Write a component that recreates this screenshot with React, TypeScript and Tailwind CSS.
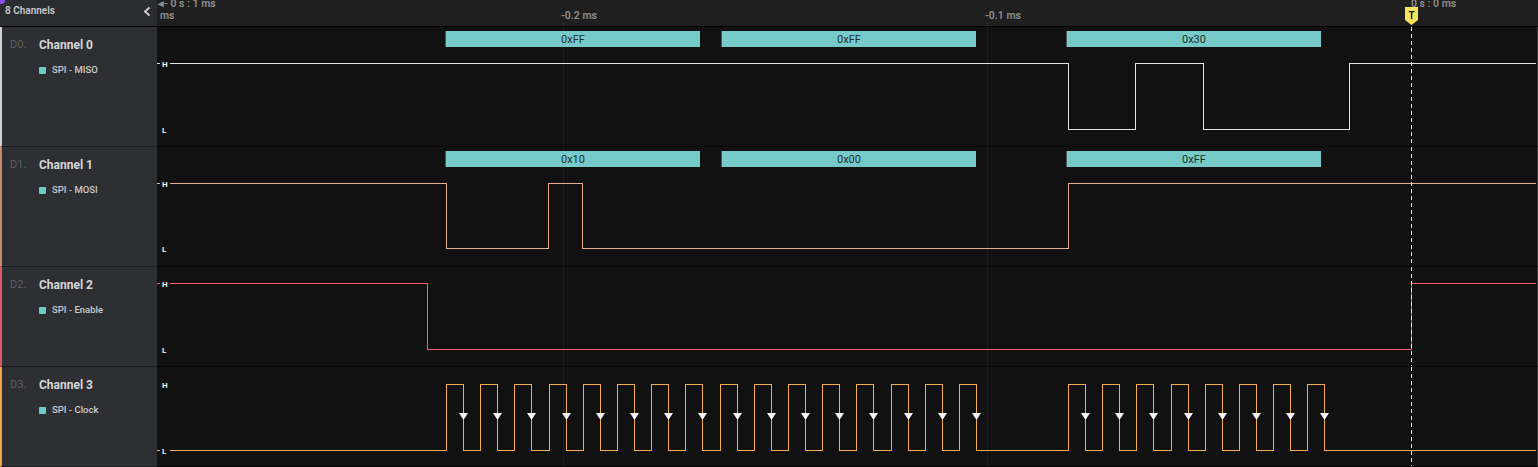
import React from 'react';

const X0 = 157;
const W = 1381;
const TRIG = 1411 - X0;
const GRID = [563 - X0, 987 - X0];

type Bus = { x: number; label: string };

interface Channel {
  tag: string;
  name: string;
  proto: string;
  rowH: string;
  stripe: string;
  wave: string;
  height: number;
  hy: number;
  ly: number;
  start: 0 | 1;
  edges: number[];
  bus?: Bus[];
  arrows?: number[];
}

// clock: two back-to-back bytes, a gap, then one more byte
const clockEdges: number[] = [];
const clockFalls: number[] = [];
[
  [446, 16],
  [1068, 8],
].forEach(([s, n]) => {
  for (let i = 0; i < n; i++) {
    const r = Math.round(s + i * 34.2);
    clockEdges.push(r, r + 17);
    clockFalls.push(r + 17);
  }
});

const channels: Channel[] = [
  {
    tag: 'D0.',
    name: 'Channel 0',
    proto: 'SPI - MISO',
    rowH: 'h-[120px]',
    stripe: 'border-[#d0d0d0]',
    wave: '#e4e4e4',
    height: 119,
    hy: 36,
    ly: 102,
    start: 1,
    edges: [1068, 1135, 1203, 1349],
    bus: [
      { x: 445, label: '0xFF' },
      { x: 721, label: '0xFF' },
      { x: 1066, label: '0x30' },
    ],
  },
  {
    tag: 'D1.',
    name: 'Channel 1',
    proto: 'SPI - MOSI',
    rowH: 'h-[120px]',
    stripe: 'border-[#c98a6b]',
    wave: '#eeae8e',
    height: 119,
    hy: 36,
    ly: 101,
    start: 1,
    edges: [446, 548, 582, 1068],
    bus: [
      { x: 445, label: '0x10' },
      { x: 721, label: '0x00' },
      { x: 1066, label: '0xFF' },
    ],
  },
  {
    tag: 'D2.',
    name: 'Channel 2',
    proto: 'SPI - Enable',
    rowH: 'h-[100px]',
    stripe: 'border-[#e0566b]',
    wave: '#f0627a',
    height: 99,
    hy: 16,
    ly: 82,
    start: 1,
    edges: [427, 1411],
  },
  {
    tag: 'D3.',
    name: 'Channel 3',
    proto: 'SPI - Clock',
    rowH: 'h-[100px]',
    stripe: 'border-[#f0a445]',
    wave: '#f6ad52',
    height: 99,
    hy: 17,
    ly: 83,
    start: 0,
    edges: clockEdges,
    arrows: clockFalls,
  },
];

function wavePoints(ch: Channel) {
  let lvl = ch.start;
  const y = (l: number) => (l ? ch.hy : ch.ly) + 0.5;
  const pts: string[] = [`0,${y(lvl)}`];
  for (const e of ch.edges) {
    const x = e - X0 + 0.5;
    pts.push(`${x},${y(lvl)}`);
    lvl = lvl ? 0 : 1;
    pts.push(`${x},${y(lvl)}`);
  }
  pts.push(`${W - 2},${y(lvl)}`);
  return pts.join(' ');
}

function LevelTag({ y, text }: { y: number; text: string }) {
  return (
    <g>
      <rect x={3} y={y - 4} width={10} height={9} fill="#121212" />
      <text x={5} y={y + 3.5} fontSize={8} fontWeight={700} fill="#f2f2f2" fontFamily="Roboto, sans-serif">
        {text}
      </text>
    </g>
  );
}

function Wave({ ch }: { ch: Channel }) {
  return (
    <svg width={W} height={ch.height} className="block" shapeRendering="crispEdges">
      {GRID.map((g) => (
        <line key={g} x1={g + 0.5} x2={g + 0.5} y1={0} y2={ch.height} stroke="#1e1e1e" />
      ))}
      {ch.bus?.map((b) => (
        <g key={b.x}>
          <rect x={b.x - X0} y={4} width={255} height={16} fill="#76cbca" />
          <rect x={b.x - X0} y={4} width={1} height={16} fill="#4b5556" />
          <text
            x={b.x - X0 + 128}
            y={16}
            textAnchor="middle"
            fontSize={11}
            fill="#1f2b2b"
            fontFamily="Roboto, sans-serif"
            shapeRendering="auto"
          >
            {b.label}
          </text>
        </g>
      ))}
      <polyline points={wavePoints(ch)} fill="none" stroke={ch.wave} strokeWidth={1} />
      {ch.arrows?.map((a) => (
        <polygon
          key={a}
          points={`${a - X0 - 4},${46} ${a - X0 + 5},${46} ${a - X0 + 0.5},${53}`}
          fill="#f4f4f4"
          shapeRendering="auto"
        />
      ))}
      <LevelTag y={ch.hy} text="H" />
      <LevelTag y={ch.ly} text="L" />
      <line
        x1={TRIG + 0.5}
        x2={TRIG + 0.5}
        y1={0}
        y2={ch.height}
        stroke="#eee8c6"
        strokeDasharray="4 3"
      />
    </svg>
  );
}

function ChannelRow({ ch }: { ch: Channel }) {
  return (
    <div className={`flex ${ch.rowH}`}>
      <div className={`w-[157px] shrink-0 bg-[#2e2f33] border-l-2 ${ch.stripe} border-b border-b-[#1c1d20] pl-[8px] pt-[10px]`}>
        <div className="flex items-center h-[16px]">
          <span className="w-[29px] text-[11px] text-[#5f6064]">{ch.tag}</span>
          <span className="text-[12px] font-bold text-[#d6d6d6]">{ch.name}</span>
        </div>
        <div className="flex items-center gap-[6px] pl-[29px] mt-[11px] h-[12px]">
          <span className="w-[7px] h-[7px] rounded-[1px] bg-[#6dcbc6]" />
          <span className="text-[9.5px] font-medium text-[#cbcbcb]">{ch.proto}</span>
        </div>
      </div>
      <div className="flex-1 bg-[#111111] border-b border-[#090909] border-r border-r-[#3a3a3a] overflow-hidden">
        <Wave ch={ch} />
      </div>
    </div>
  );
}

export default function App() {
  return (
    <div className="w-[1538px] h-[467px] overflow-hidden bg-[#111111] font-[Roboto,sans-serif] select-none">
      {/* header */}
      <div className="flex h-[27px] border-b border-black">
        <div className="relative w-[157px] shrink-0 bg-[#2b2c30] flex items-start justify-between pl-[5px] pr-[6px] pt-[5px]">
          <span className="absolute -left-[3px] -top-[4px] w-[8px] h-[8px] rounded-full bg-[#8a4cf2]" />
          <span className="text-[10px] leading-[12px] font-semibold text-[#c8c8c8]">8 Channels</span>
          <svg width="8" height="11" viewBox="0 0 8 11" className="mt-[1px]">
            <polyline points="6.5,1.5 2,5.5 6.5,9.5" fill="none" stroke="#d4d4d4" strokeWidth="1.8" />
          </svg>
        </div>
        <div className="relative flex-1 bg-[#1f1f1f] text-[10.5px] leading-[10px] font-semibold text-[#909090]">
          <span className="absolute left-[1px] -top-[1px] whitespace-nowrap">◂- 0 s : 1 ms</span>
          <span className="absolute left-[3px] top-[11px]">ms</span>
          <span className="absolute left-[404px] top-[11px] whitespace-nowrap">-0.2 ms</span>
          <span className="absolute left-[828px] top-[11px] whitespace-nowrap">-0.1 ms</span>
          <span className="absolute left-[1254px] -top-[1px] whitespace-nowrap">0 s : 0 ms</span>
          <span className="absolute left-[406px] top-[22px] w-px h-[4px] bg-[#333]" />
          <span className="absolute left-[830px] top-[22px] w-px h-[4px] bg-[#333]" />
          {/* trigger flag */}
          <svg width="13" height="19" viewBox="0 0 13 19" className="absolute left-[1248px] top-[7px]">
            <path d="M0 0 H13 V13 L6.5 18 L0 13 Z" fill="#f7e35c" />
            <text x="6.5" y="11.5" textAnchor="middle" fontSize="10" fill="#111" fontFamily="Roboto, sans-serif">
              T
            </text>
          </svg>
        </div>
      </div>
      {channels.map((ch) => (
        <ChannelRow key={ch.tag} ch={ch} />
      ))}
    </div>
  );
}
